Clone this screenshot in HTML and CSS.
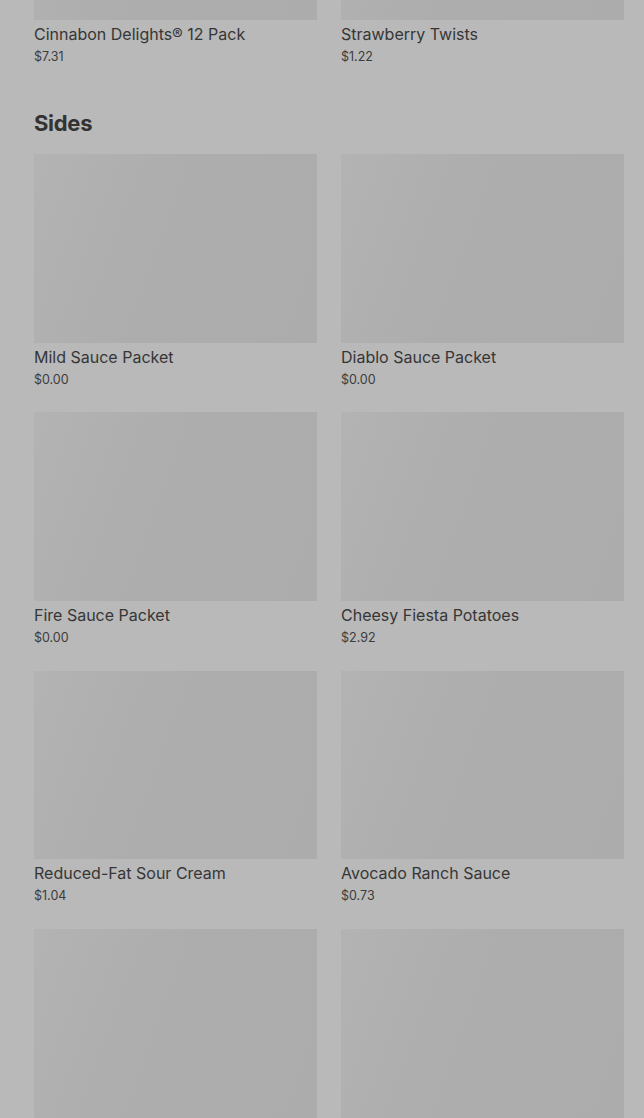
FILE: index.html
```html
<!DOCTYPE html>
<html lang="en">
<head>
    <meta charset="UTF-8">
    <meta name="viewport" content="width=device-width, initial-scale=1.0">
    <title>Menu</title>
    <link rel="stylesheet" href="styles.css">
</head>
<body>
    <div class="menu">
        <div class="grid top">
            <div class="item">
                <div class="img"></div>
                <p class="name">Cinnabon Delights® 12 Pack</p>
                <p class="price">$7.31</p>
            </div>
            <div class="item">
                <div class="img"></div>
                <p class="name">Strawberry Twists</p>
                <p class="price">$1.22</p>
            </div>
        </div>

        <h2 class="section">Sides</h2>
        <div class="grid">
            <div class="item">
                <div class="img"></div>
                <p class="name">Mild Sauce Packet</p>
                <p class="price">$0.00</p>
            </div>
            <div class="item">
                <div class="img"></div>
                <p class="name">Diablo Sauce Packet</p>
                <p class="price">$0.00</p>
            </div>
            <div class="item">
                <div class="img"></div>
                <p class="name">Fire Sauce Packet</p>
                <p class="price">$0.00</p>
            </div>
            <div class="item">
                <div class="img"></div>
                <p class="name">Cheesy Fiesta Potatoes</p>
                <p class="price">$2.92</p>
            </div>
            <div class="item">
                <div class="img"></div>
                <p class="name">Reduced-Fat Sour Cream</p>
                <p class="price">$1.04</p>
            </div>
            <div class="item">
                <div class="img"></div>
                <p class="name">Avocado Ranch Sauce</p>
                <p class="price">$0.73</p>
            </div>
            <div class="item">
                <div class="img"></div>
            </div>
            <div class="item">
                <div class="img"></div>
            </div>
        </div>
    </div>
</body>
</html>
```

FILE: styles.css
```css
* {
    margin: 0;
    padding: 0;
    box-sizing: border-box;
}

body {
    background-color: #b9b9b9;
    color: #363636;
    font-family: Inter, "Liberation Sans", sans-serif;
    overflow: hidden;
}

.menu {
    padding: 0 20px 0 34px;
}

.grid {
    display: grid;
    grid-template-columns: 1fr 1fr;
    column-gap: 24px;
    row-gap: 22.67px;
}

.top {
    margin-top: -168.67px;
}

.img {
    aspect-ratio: 3 / 2;
    background: linear-gradient(110deg, #b3b3b3 0%, #afafaf 30%, #adadad 45%, #acacac 100%);
}

.name {
    font-size: 16px;
    line-height: 24px;
    padding-top: 2px;
}

.price {
    font-size: 12.5px;
    line-height: 21px;
    color: #3c3c3c;
}

.section {
    font-size: 22px;
    font-weight: 700;
    line-height: 32px;
    margin-top: 40px;
    margin-bottom: 15px;
    letter-spacing: -0.3px;
    color: #333333;
}
```
